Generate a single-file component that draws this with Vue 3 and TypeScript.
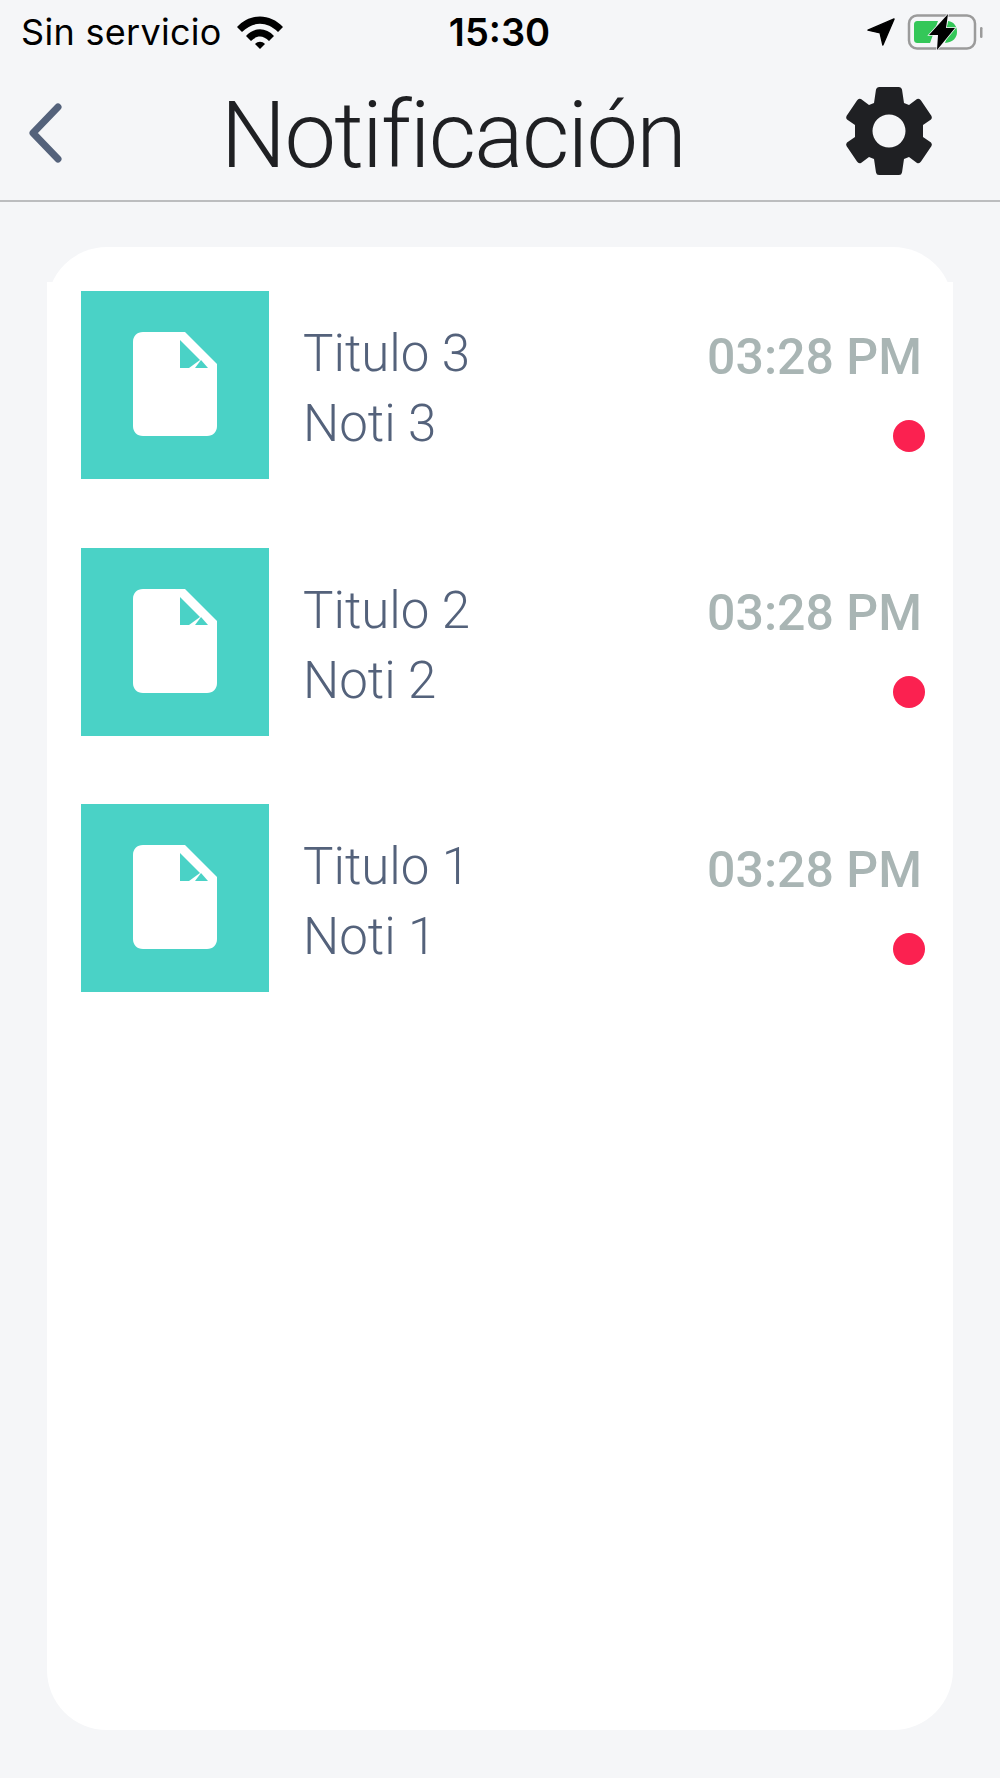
<script setup lang="ts">
interface Notificacion {
  id: number
  titulo: string
  texto: string
  hora: string
}

const notificaciones: Notificacion[] = [
  { id: 3, titulo: 'Titulo 3', texto: 'Noti 3', hora: '03:28 PM' },
  { id: 2, titulo: 'Titulo 2', texto: 'Noti 2', hora: '03:28 PM' },
  { id: 1, titulo: 'Titulo 1', texto: 'Noti 1', hora: '03:28 PM' }
]
</script>

<template>
  <div class="screen">
    <div class="status-bar">
      <div class="status-left">
        <span class="carrier">Sin servicio</span>
        <svg class="wifi" viewBox="0 0 46 34" width="46" height="34">
          <path d="M0 11 C13 -3 33 -3 46 11 L41 16 C30 5 16 5 5 16 Z" fill="#000" />
          <path d="M9 20 C17 11 29 11 37 20 L32 25 C26 19 20 19 14 25 Z" fill="#000" />
          <path d="M18 28 C21 25 25 25 28 28 L23 33 Z" fill="#000" />
        </svg>
      </div>
      <span class="clock">15:30</span>
      <div class="status-right">
        <svg class="arrow" viewBox="0 0 30 30" width="28" height="28">
          <path d="M1 13 L29 1 L17 29 L14 16 Z" fill="#000" stroke="#000" stroke-linejoin="round" stroke-width="1.5" />
        </svg>
        <svg class="battery" viewBox="0 0 78 38" width="78" height="38">
          <rect x="3" y="2.5" width="66" height="33" rx="8" fill="none" stroke="#9b9b9b" stroke-width="2.5" />
          <rect x="74" y="14" width="2.5" height="11" rx="1.2" fill="#9b9b9b" />
          <path d="M12 8 H32 L24 30 H12 C9 30 8 29 8 26 V12 C8 9 9 8 12 8 Z" fill="#34c759" />
          <path d="M42 8 C48 9 51 13 51 19 C51 25 47 29 39 30 L43 18 H40 Z" fill="#34c759" />
          <path d="M42 1 L23 22 H32 L31 37 L49 15 H40 Z" fill="#000" stroke="#f5f6f8" stroke-width="1.5" paint-order="stroke" />
        </svg>
      </div>
    </div>

    <header class="nav-bar">
      <svg class="back" viewBox="0 0 40 64" width="40" height="64">
        <path d="M32 6 L7 32 L32 58" fill="none" stroke="#54627b" stroke-width="7" stroke-linecap="round" stroke-linejoin="round" />
      </svg>
      <h1 class="title">Notificación</h1>
      <svg class="gear" viewBox="-44 -44 88 88" width="88" height="88">
        <path
          fill-rule="evenodd"
          d="M-10 -44 H10 Q12.5 -44 13 -41.5 L15 -28 L20 -26 L28 -32 Q30.5 -33 32 -30.5 L42.5 -15 Q43.5 -13 42 -11.5 L34 -6 V6 L42 11.5 Q43.5 13 42.5 15 L32 30.5 Q30.5 33 28 32 L20 26 L15 28 L13 41.5 Q12.5 44 10 44 H-10 Q-12.5 44 -13 41.5 L-15 28 L-20 26 L-28 32 Q-30.5 33 -32 30.5 L-42.5 15 Q-43.5 13 -42 11.5 L-34 6 V-6 L-42 -11.5 Q-43.5 -13 -42.5 -15 L-32 -30.5 Q-30.5 -33 -28 -32 L-20 -26 L-15 -28 L-13 -41.5 Q-12.5 -44 -10 -44 Z M16.5 0 A16.5 16.5 0 1 0 -16.5 0 A16.5 16.5 0 1 0 16.5 0 Z"
          fill="#1f2023"
        />
      </svg>
    </header>

    <main class="content">
      <section class="card">
        <article v-for="n in notificaciones" :key="n.id" class="row">
          <div class="thumb">
            <svg class="file" viewBox="0 0 84 104" width="84" height="104">
              <path fill-rule="evenodd" d="M10 0 H52 L84 32 V94 C84 100 80 104 74 104 H10 C4 104 0 100 0 94 V10 C0 4 4 0 10 0 Z M47 8 V36 H56 L67 28 Z M62 36 H75 L68 28 Z" fill="#fff" />
            </svg>
          </div>
          <div class="texts">
            <div class="row-title">{{ n.titulo }}</div>
            <div class="row-body">{{ n.texto }}</div>
          </div>
          <div class="meta">
            <span class="time">{{ n.hora }}</span>
            <span class="dot"></span>
          </div>
        </article>
      </section>
    </main>
  </div>
</template>

<style>
html,
body {
  margin: 0;
  background: #f5f6f8;
}
</style>

<style scoped>
.screen {
  width: 1000px;
  height: 1778px;
  background: #f5f6f8;
  display: flex;
  flex-direction: column;
  font-family: Roboto, "Liberation Sans", sans-serif;
  overflow: hidden;
}

.status-bar {
  height: 64px;
  padding: 0 16px 0 21px;
  display: grid;
  grid-template-columns: 1fr auto 1fr;
  align-items: center;
  color: #000;
}

.status-left {
  display: flex;
  align-items: center;
  gap: 15px;
}

.carrier {
  font-family: Inter, sans-serif;
  font-size: 36px;
  letter-spacing: 0.3px;
}

.wifi {
  margin-top: 2px;
}

.clock {
  font-family: Inter, sans-serif;
  font-size: 38px;
  font-weight: 600;
  margin-right: 6px;
}

.status-right {
  display: flex;
  justify-content: flex-end;
  align-items: center;
  gap: 11px;
}

.nav-bar {
  height: 138px;
  box-sizing: border-box;
  border-bottom: 2px solid #bcbdbf;
  padding: 0 67px 3px 26px;
  display: flex;
  align-items: center;
  justify-content: space-between;
}

.back {
  margin-top: 4px;
}

.title {
  margin: 9px 5px 0 0;
  font-size: 92px;
  font-weight: 300;
  color: #1f2023;
  letter-spacing: -1.75px;
}

.content {
  flex: 1;
  padding: 45px 47px 48px;
  display: flex;
}

.card {
  flex: 1;
  position: relative;
  z-index: 0;
  background: #fff;
  border-radius: 60px;
  padding: 44px 28px 0 34px;
  display: flex;
  flex-direction: column;
  gap: 68.5px;
}

.card::before {
  content: "";
  position: absolute;
  z-index: -1;
  top: 35px;
  left: 0;
  right: 0;
  height: 30px;
  background: #fff;
}

.row {
  display: flex;
  align-items: center;
  height: 188px;
}

.thumb {
  width: 188px;
  height: 188px;
  background: #4ad2c6;
  display: flex;
  align-items: center;
  justify-content: center;
  flex: none;
}

.file {
  margin-bottom: 2px;
}

.texts {
  margin: 8px 0 0 34px;
  flex: 1;
  font-weight: 300;
  color: #54627b;
}

.row-title,
.row-body {
  font-size: 51px;
  line-height: 70px;
}

.meta {
  display: flex;
  flex-direction: column;
  align-items: flex-end;
  gap: 34px;
  margin-top: 9px;
}

.time {
  font-size: 50px;
  font-weight: 500;
  color: #a9b5b4;
  margin-right: 3px;
}

.dot {
  width: 32px;
  height: 32px;
  border-radius: 50%;
  background: #fb2150;
}
</style>
